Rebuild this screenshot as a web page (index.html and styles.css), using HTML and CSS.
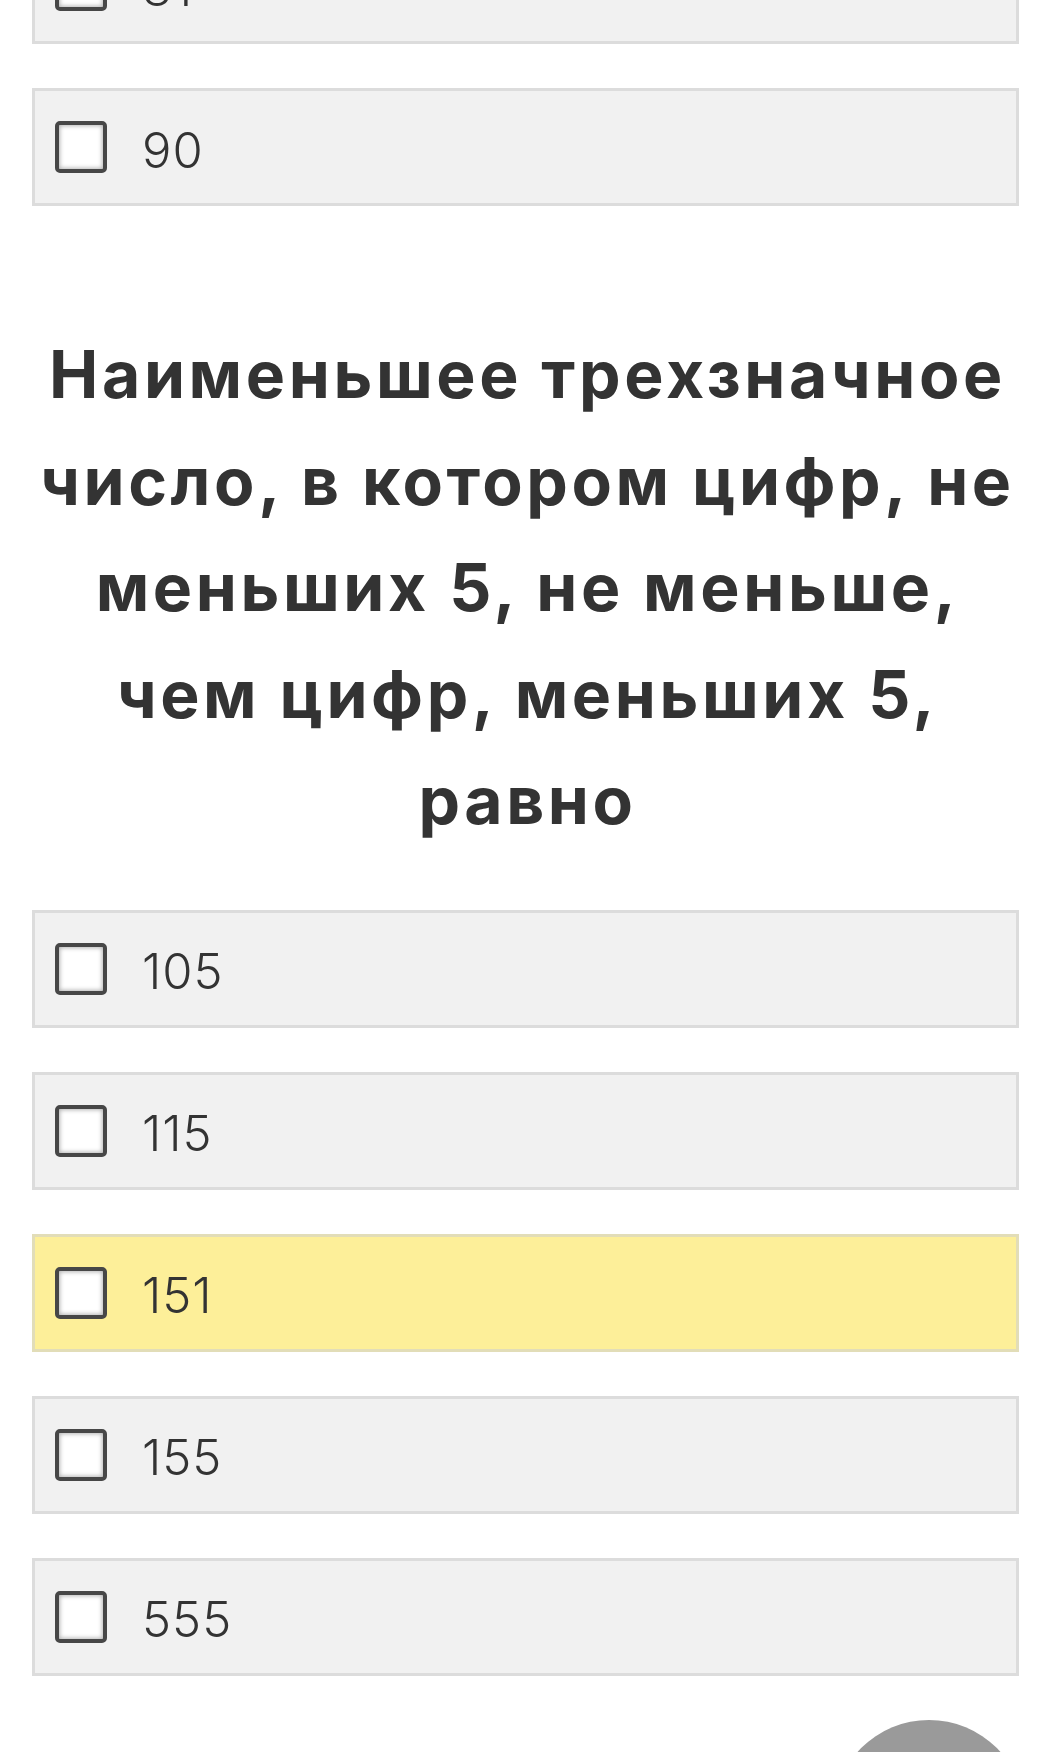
FILE: index.html
```html
<!DOCTYPE html>
<html lang="ru">
<head>
  <meta charset="UTF-8">
  <meta name="viewport" content="width=device-width, initial-scale=1.0">
  <title>Тест</title>
  <link rel="stylesheet" href="styles.css">
</head>
<body>
  <div class="quiz">
    <!-- хвост предыдущего вопроса -->
    <label class="option"><input type="checkbox"><span>81</span></label>
    <label class="option"><input type="checkbox"><span>90</span></label>

    <h2 class="question">Наименьшее трехзначное число, в котором цифр, не меньших 5, не меньше, чем цифр, меньших 5, равно</h2>

    <label class="option"><input type="checkbox"><span>105</span></label>
    <label class="option"><input type="checkbox"><span>115</span></label>
    <label class="option option-marked"><input type="checkbox"><span>151</span></label>
    <label class="option"><input type="checkbox"><span>155</span></label>
    <label class="option"><input type="checkbox"><span>555</span></label>
  </div>

  <button class="to-top" aria-label="Наверх"></button>
</body>
</html>
```

FILE: styles.css
```css
body {
  margin: 0;
  background: #fff;
  color: #333;
  font-family: 'Inter', 'Noto Sans', sans-serif;
  overflow: hidden;
}

.quiz {
  margin-top: -74px;
  padding: 0 30px 0 32px;
}

.option {
  display: flex;
  align-items: center;
  box-sizing: border-box;
  height: 118px;
  margin-bottom: 44px;
  padding-left: 20px;
  background: #f1f1f1;
  border: 3px solid #dcdcdc;
  cursor: pointer;
}

.option-marked {
  background: #fdef99;
  border-color: #e2ddb8;
}

.option input {
  appearance: none;
  -webkit-appearance: none;
  flex: none;
  width: 52px;
  height: 52px;
  margin: 0 35px 0 0;
  background: #fff;
  border: 4px solid #474747;
  border-radius: 5px;
  box-sizing: border-box;
  box-shadow: inset 0 0 4px 1px rgba(0, 0, 0, 0.3);
}

.option span {
  font-size: 49px;
  font-weight: 300;
  letter-spacing: 1px;
  line-height: 1;
  padding-top: 6px;
}

.question {
  margin: 115px 0 56px;
  padding-left: 4px;
  text-align: center;
  font-size: 66px;
  font-weight: 700;
  letter-spacing: 3.6px;
  line-height: 106.5px;
  color: #333;
}

.to-top {
  position: fixed;
  left: 833px;
  top: 1720px;
  width: 192px;
  height: 192px;
  padding: 0;
  border: none;
  border-radius: 50%;
  background: #9a9a9a;
}
```
